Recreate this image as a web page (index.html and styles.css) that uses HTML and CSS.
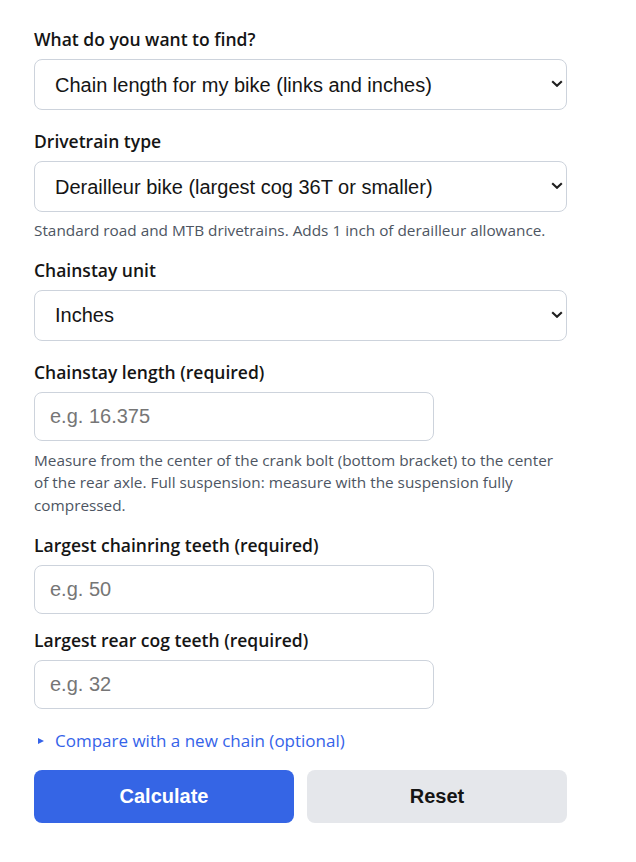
FILE: index.html
```html
<!DOCTYPE html>
<html lang="en">
<head>
<meta charset="utf-8">
<title>Bike Chain Length Calculator</title>
<link rel="stylesheet" href="styles.css">
</head>
<body>
<form class="calc">
  <div class="field field-select">
    <label class="label" for="goal">What do you want to find?</label>
    <div class="select-wrap">
      <select id="goal" class="control select">
        <option>Chain length for my bike (links and inches)</option>
      </select>
      <svg class="chev" viewBox="0 0 12 7" width="12" height="7"><path d="M1.2 1.2l4.8 4.6 4.8-4.6" fill="none" stroke="#1f1f1f" stroke-width="2.1"/></svg>
    </div>
  </div>

  <div class="field field-select field-hint">
    <label class="label" for="drive">Drivetrain type</label>
    <div class="select-wrap">
      <select id="drive" class="control select">
        <option>Derailleur bike (largest cog 36T or smaller)</option>
      </select>
      <svg class="chev" viewBox="0 0 12 7" width="12" height="7"><path d="M1.2 1.2l4.8 4.6 4.8-4.6" fill="none" stroke="#1f1f1f" stroke-width="2.1"/></svg>
    </div>
    <p class="hint hint-select">Standard road and MTB drivetrains. Adds 1 inch of derailleur allowance.</p>
  </div>

  <div class="field field-select">
    <label class="label" for="unit">Chainstay unit</label>
    <div class="select-wrap">
      <select id="unit" class="control select">
        <option>Inches</option>
      </select>
      <svg class="chev" viewBox="0 0 12 7" width="12" height="7"><path d="M1.2 1.2l4.8 4.6 4.8-4.6" fill="none" stroke="#1f1f1f" stroke-width="2.1"/></svg>
    </div>
  </div>

  <div class="field field-input field-hint-long">
    <label class="label" for="cs">Chainstay length (required)</label>
    <input id="cs" class="control input" type="text" placeholder="e.g. 16.375">
    <p class="hint hint-input">Measure from the center of the crank bolt (bottom bracket) to the center of the rear axle. Full suspension: measure with the suspension fully compressed.</p>
  </div>

  <div class="field field-input">
    <label class="label" for="ring">Largest chainring teeth (required)</label>
    <input id="ring" class="control input" type="text" placeholder="e.g. 50">
  </div>

  <div class="field field-input">
    <label class="label" for="cog">Largest rear cog teeth (required)</label>
    <input id="cog" class="control input" type="text" placeholder="e.g. 32">
  </div>

  <details class="more">
    <summary>Compare with a new chain (optional)</summary>
  </details>

  <div class="actions">
    <button type="button" class="btn primary">Calculate</button>
    <button type="reset" class="btn secondary">Reset</button>
  </div>
</form>
</body>
</html>
```

FILE: styles.css
```css
html, body {
  margin: 0;
  padding: 0;
  background: #ffffff;
}

body {
  font-family: "Open Sans", "Noto Sans", sans-serif;
  color: #151515;
}

.calc {
  width: 533px;
  padding: 27px 34px 20px;
}

.field {
  display: flex;
  flex-direction: column;
}

.field-select {
  margin-bottom: 19px;
}

.field-input {
  margin-bottom: 14px;
}

.field-hint {
  margin-bottom: 16px;
}

.field-hint-long {
  margin-bottom: 17px;
}

.label {
  font-size: 17.5px;
  font-weight: 600;
  line-height: 24px;
  margin-bottom: 8px;
  color: #151515;
}

.control {
  box-sizing: border-box;
  font-family: "Liberation Sans", Arial, sans-serif;
  font-size: 20px;
  color: #151515;
  background: #fff;
  border: 1px solid #cdd3dc;
  border-radius: 8px;
  outline: none;
  margin: 0;
}

.select-wrap {
  position: relative;
  width: 533px;
}

.select {
  appearance: none;
  -webkit-appearance: none;
  display: block;
  width: 100%;
  height: 51px;
  padding: 0 40px 0 20px;
}

.chev {
  position: absolute;
  right: 4px;
  top: 21px;
  pointer-events: none;
}

.input {
  display: block;
  width: 400px;
  height: 49px;
  padding: 0 15px;
}

.input::placeholder {
  color: #767676;
}

.hint {
  margin: 0;
  font-size: 15.33px;
  line-height: 22.5px;
  color: #4d5562;
}

.hint-select {
  margin-top: 7px;
}

.hint-input {
  margin-top: 8px;
}

.more {
  margin: 20px 0 17px;
  color: #3563e9;
  font-size: 17px;
  font-weight: 500;
}

.more summary {
  display: flex;
  align-items: center;
  list-style: none;
  cursor: pointer;
  line-height: 24px;
  padding-left: 4px;
}

.more summary::-webkit-details-marker {
  display: none;
}

/* disclosure triangle */
.more summary::before {
  content: "";
  width: 0;
  height: 0;
  border-top: 3.5px solid transparent;
  border-bottom: 3.5px solid transparent;
  border-left: 6px solid #3563e9;
  margin-right: 11px;
}

.actions {
  display: grid;
  grid-template-columns: 1fr 1fr;
  gap: 13px;
}

.btn {
  height: 53px;
  border: none;
  border-radius: 8px;
  font-family: "Liberation Sans", Arial, sans-serif;
  font-size: 20px;
  font-weight: 700;
  cursor: pointer;
}

.primary {
  background: #3565e5;
  color: #ffffff;
}

.secondary {
  background: #e5e7eb;
  color: #151515;
}
```
